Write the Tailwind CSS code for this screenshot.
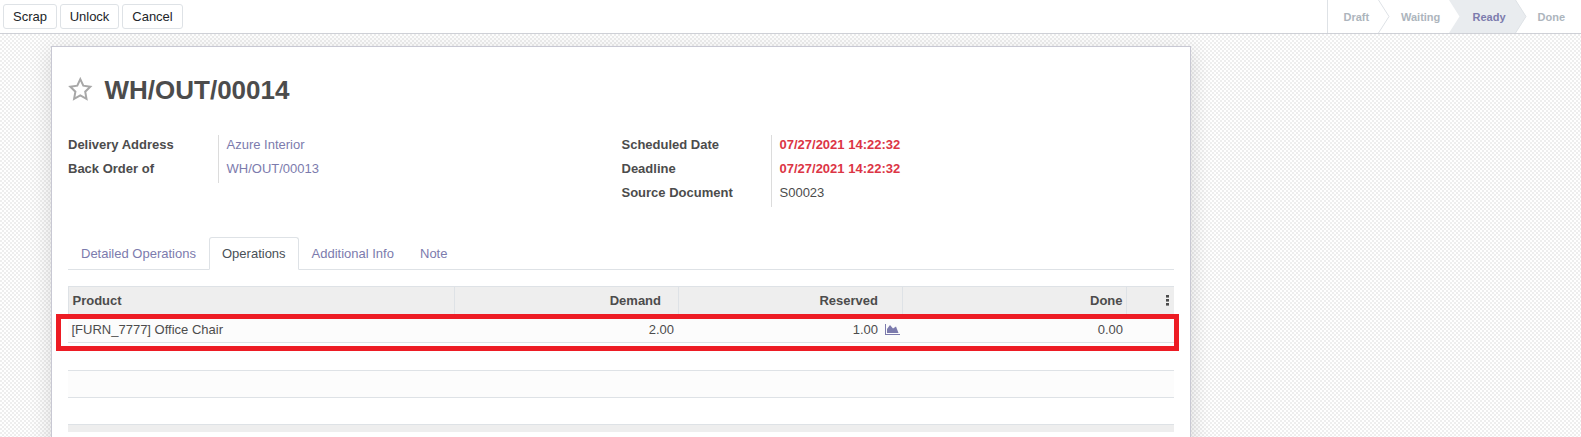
<!DOCTYPE html>
<html lang="en">
<head>
<meta charset="utf-8">
<title>WH/OUT/00014</title>
<script src="https://cdn.jsdelivr.net/npm/@tailwindcss/browser@4"></script>
</head>
<body class="w-[1581px] h-[437px] overflow-hidden bg-white font-['Liberation_Sans',Arial,sans-serif] text-[13px] leading-[20px] text-[#4c4c4c]">
<div class="h-full flex flex-col overflow-hidden">
  <header class="h-[34px] shrink-0 flex justify-between border-b border-[#ced0d6] bg-white">
    <div class="flex gap-[3px] pl-[3px] pt-1 text-[#212529]">
      <button class="w-[54px] h-[25px] border border-[#dee2e6] rounded-[3px]">Scrap</button>
      <button class="w-[59px] h-[25px] border border-[#dee2e6] rounded-[3px]">Unlock</button>
      <button class="w-[61px] h-[25px] border border-[#dee2e6] rounded-[3px]">Cancel</button>
    </div>
    <div class="relative w-[254px] h-[33px] border-l border-[#dee2e6] text-[11px] font-bold text-[#adb5bd] leading-[34px]">
      <svg class="absolute inset-0" width="253" height="33" viewBox="0 0 253 33" fill="none">
        <path d="M50.500 0L61 16.500L50.500 33" stroke="#dee2e6"/>
        <path d="M121 0H187.500L198 16.500L187.500 33H121L131.500 16.500Z" fill="#e9ecef"/>
        <path d="M187.500 0L198 16.500L187.500 33" stroke="#dee2e6"/>
      </svg>
      <div class="relative flex">
        <span class="w-[57px] pl-[15.500px]">Draft</span>
        <span class="w-[72px] pl-4">Waiting</span>
        <span class="w-[65px] pl-[15.500px] text-[#7c7bad]">Ready</span>
        <span class="pl-[15.500px]">Done</span>
      </div>
    </div>
  </header>
  <main class="h-[403px] overflow-hidden pl-[51px] pt-3 bg-[repeating-conic-gradient(#eeeeee_0_25%,#ffffff_0_50%)] bg-[length:4px_4px]">
    <section class="w-[1140px] h-[420px] bg-white border border-[#c8c8d3] shadow-[0_5px_20px_rgba(0,0,0,0.15)] px-4">
      <div class="flex h-[88px] pt-[27px]">
        <svg class="mt-[3px] shrink-0" width="25" height="25" viewBox="0 0 25 25" fill="none" stroke="#a8a8a8" stroke-width="2" stroke-linejoin="miter"><path d="M12.300 2.200L15.300 8.700L22.300 9.700L17.200 14.700L18.500 21.800L12.300 18.400L6.100 21.800L7.400 14.700L2.300 9.700L9.300 8.700Z"/></svg>
        <h1 class="ml-[11.500px] text-[26px] leading-8 font-bold">WH/OUT/00014</h1>
      </div>
      <div class="flex h-[102px]">
        <dl class="w-[553.500px] grid grid-cols-[150px_1fr] auto-rows-[24px] content-start leading-5">
          <dt class="font-bold">Delivery Address</dt><dd class="border-l border-[#dcdcdc] pl-[7.500px] text-[#7c7bad]">Azure Interior</dd>
          <dt class="font-bold">Back Order of</dt><dd class="border-l border-[#dcdcdc] pl-[7.500px] text-[#7c7bad]">WH/OUT/00013</dd>
        </dl>
        <dl class="w-[552.500px] grid grid-cols-[149.500px_1fr] auto-rows-[24px] content-start leading-5">
          <dt class="font-bold">Scheduled Date</dt><dd class="border-l border-[#dcdcdc] pl-[7.500px] text-[#dc3545] font-bold">07/27/2021 14:22:32</dd>
          <dt class="font-bold">Deadline</dt><dd class="border-l border-[#dcdcdc] pl-[7.500px] text-[#dc3545] font-bold">07/27/2021 14:22:32</dd>
          <dt class="font-bold">Source Document</dt><dd class="border-l border-[#dcdcdc] pl-[7.500px]">S00023</dd>
        </dl>
      </div>
      <nav class="flex h-[33px] w-[1106px] border-b border-[#dee2e6] leading-[33px] text-[#7c7bad]">
        <span class="w-[141px] pl-[13px]">Detailed Operations</span>
        <span class="w-[90px] h-[33px] pl-3 border border-b-white border-[#dee2e6] rounded-t-[3px] bg-white text-[#495057] leading-[31px]">Operations</span>
        <span class="w-[109px] pl-[12.500px]">Additional Info</span>
        <span class="pl-3">Note</span>
      </nav>
      <div class="mt-4 w-[1106px] relative">
        <div class="grid grid-cols-[387px_224px_224px_224px_47px] h-[28px] border-t border-[#dee2e6] bg-[#eeeeee] font-bold leading-[28px] text-right">
          <div class="border-l border-r border-[#dee2e6] pl-[3.500px] text-left">Product</div>
          <div class="border-r border-[#dee2e6] pr-[17px]">Demand</div>
          <div class="border-r border-[#dee2e6] pr-[24px]">Reserved</div>
          <div class="border-r border-[#dee2e6] pr-[3.500px]">Done</div>
          <div class="flex justify-end pr-[5px] pt-2">
            <svg width="3" height="11" viewBox="0 0 3 11" fill="#4c4c4c"><rect width="3" height="2.600"/><rect y="4" width="3" height="2.600"/><rect y="8" width="3" height="2.600"/></svg>
          </div>
        </div>
        <div class="grid grid-cols-[387px_224px_224px_224px_47px] h-[29px] border-b border-[#dee2e6] bg-[#fcfcfc] leading-[31px] text-right">
          <div class="pl-[3.500px] text-left">[FURN_7777] Office Chair</div>
          <div class="pr-[5px]">2.00</div>
          <div class="flex justify-end pr-[3px]">1.00
            <svg class="ml-[7px] mt-[10px]" width="15" height="11" viewBox="0 0 15 11" fill="#7c7bad"><path d="M0 0H1V10H15V11H0ZM2 9V5L5 1L8 4.500L11 2.500L13.500 9Z"/></svg>
          </div>
          <div class="pr-[4px]">0.00</div>
          <div></div>
        </div>
        <div class="h-[28px] border-b border-[#dee2e6]"></div>
        <div class="h-[27px] border-b border-[#dee2e6] bg-[#fcfcfc]"></div>
        <div class="h-[27px] border-b border-[#dee2e6]"></div>
        <div class="h-[7px] bg-[#eeeeee]"></div>
        <div class="absolute left-[-12px] top-[28px] w-[1123px] h-[37px] border-5 border-[#ed1c24]"></div>
      </div>
    </section>
  </main>
</div>
</body>
</html>
